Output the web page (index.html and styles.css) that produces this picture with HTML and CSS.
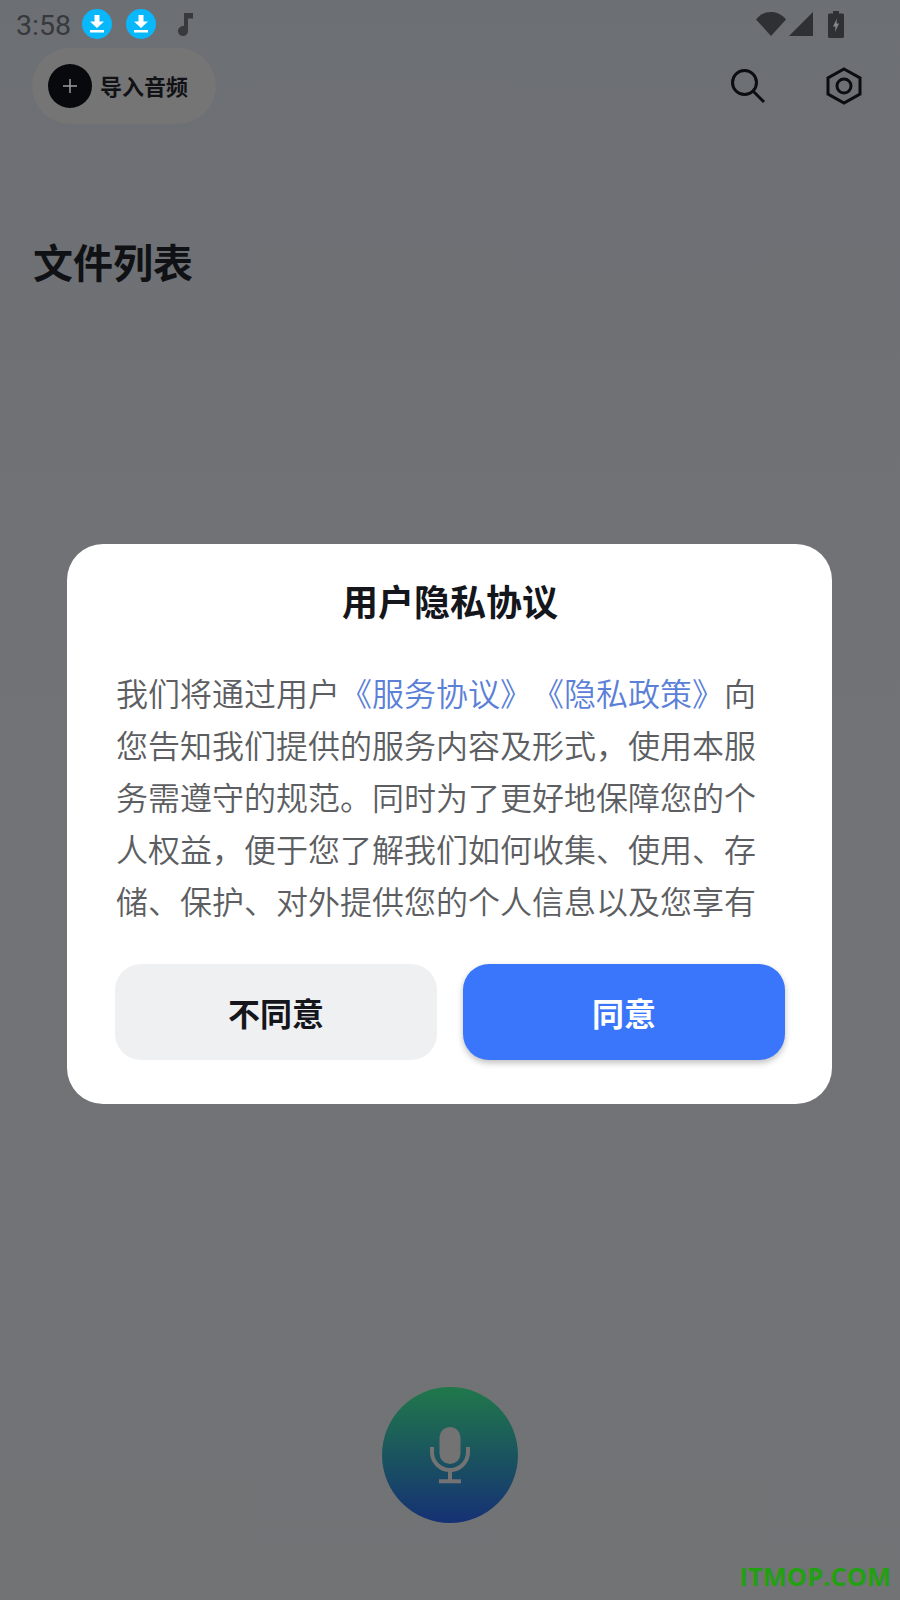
FILE: index.html
```html
<!DOCTYPE html>
<html lang="zh-CN">
<head>
    <meta charset="UTF-8">
    <meta name="viewport" content="width=device-width, initial-scale=1.0">
    <title>文件列表</title>
    <link rel="stylesheet" href="styles.css">
</head>
<body>
    <div class="screen">
        <!-- Status Bar -->
        <div class="status-bar">
            <div class="status-left">
                <span class="clock">3:58</span>
                <span class="dl-badge">
                    <svg width="18" height="20" viewBox="0 0 18 20"><path d="M6.500 1h5v6.500H16L9 14 2 7.500h4.500z" fill="#fff"/><rect x="2" y="16" width="14" height="2.500" fill="#fff"/></svg>
                </span>
                <span class="dl-badge">
                    <svg width="18" height="20" viewBox="0 0 18 20"><path d="M6.500 1h5v6.500H16L9 14 2 7.500h4.500z" fill="#fff"/><rect x="2" y="16" width="14" height="2.500" fill="#fff"/></svg>
                </span>
                <svg class="note" width="16" height="23" viewBox="0 0 16 23"><path d="M7 0h9v5.500h-5V18a5 5 0 1 1-4-4.900z" fill="#38393c"/></svg>
            </div>
            <div class="status-right">
                <svg width="30" height="26" viewBox="0 0 30 26"><path d="M0 8.500C4 3.500 9 1 15 1s11 2.500 15 7.500L15 25z" fill="#2f3033"/></svg>
                <svg width="24" height="24" viewBox="0 0 24 24"><path d="M24 0v24H0z" fill="#2f3033"/></svg>
                <svg class="battery" width="16" height="27" viewBox="0 0 16 27"><path d="M5 0h6v2.500h3.500q1.500 0 1.500 1.500v21.500q0 1.500-1.500 1.500h-13Q0 27 0 25.500V4q0-1.500 1.500-1.500H5z" fill="#2f3033"/><path d="M9 7.500l-4 8h2.500L7 21l4-8.500H8.500z" fill="#85888c"/></svg>
            </div>
        </div>

        <!-- Top Toolbar -->
        <div class="toolbar">
            <div class="import-pill">
                <span class="plus-circle">
                    <svg width="16" height="16" viewBox="0 0 16 16"><path d="M8 1v14M1 8h14" stroke="#9b9c9e" stroke-width="1.500"/></svg>
                </span>
                <span class="import-label">导入音频</span>
            </div>
            <div class="toolbar-icons">
                <svg width="36" height="36" viewBox="0 0 36 36" fill="none" stroke="#0c0d10" stroke-width="3"><circle cx="14.500" cy="14.500" r="12"/><path d="M23.500 23.500L34 34"/></svg>
                <svg width="36" height="38" viewBox="0 0 36 38" fill="none" stroke="#0c0d10" stroke-width="3"><path d="M18 2l16 9v16l-16 9-16-9V11z"/><circle cx="18" cy="19" r="7"/></svg>
            </div>
        </div>

        <h1 class="page-title">文件列表</h1>

        <!-- Record Button -->
        <div class="record-row">
            <div class="record-btn">
                <svg width="42" height="58" viewBox="0 0 42 58"><rect x="10.500" y="1" width="21" height="37" rx="10.500" fill="#737374"/><path d="M3 21v5a18 18 0 0 0 36 0v-5" fill="none" stroke="#737374" stroke-width="4"/><path d="M21 44v12M10 55.300h22" fill="none" stroke="#737374" stroke-width="4"/></svg>
            </div>
        </div>

        <!-- Privacy Dialog -->
        <div class="dialog-layer">
            <div class="dialog">
                <h2 class="dialog-title">用户隐私协议</h2>
                <p class="dialog-body">我们将通过用户<a class="link">《服务协议》《隐私政策》</a>向您告知我们提供的服务内容及形式，使用本服务需遵守的规范。同时为了更好地保障您的个人权益，便于您了解我们如何收集、使用、存储、保护、对外提供您的个人信息以及您享有</p>
                <div class="dialog-actions">
                    <button class="btn btn-decline">不同意</button>
                    <button class="btn btn-accept">同意</button>
                </div>
            </div>
        </div>

        <div class="site-mark">ITMOP.COM</div>
    </div>
</body>
</html>
```

FILE: styles.css
```css
/* Global Styles */
body, html {
    margin: 0;
    padding: 0;
}

body {
    font-family: "Noto Sans CJK SC", "Noto Sans", sans-serif;
}

.screen {
    position: relative;
    width: 900px;
    height: 1600px;
    overflow: hidden;
    display: flex;
    flex-direction: column;
    background: linear-gradient(180deg, #6c6f74 0%, #707275 35%, #727375 100%);
}

/* Status Bar */
.status-bar {
    height: 48px;
    display: flex;
    justify-content: space-between;
    align-items: center;
    padding: 0 56px 0 16px;
    box-sizing: border-box;
}

.status-left {
    display: flex;
    align-items: center;
}

.clock {
    font-family: Roboto, sans-serif;
    font-size: 28.500px;
    color: #38393c;
    width: 66px;
    margin-top: 2px;
}

.dl-badge {
    width: 30px;
    height: 30px;
    border-radius: 50%;
    background-color: #08b8fb;
    display: flex;
    align-items: center;
    justify-content: center;
    margin-right: 14px;
}

.note {
    margin-left: 7px;
}

.status-right {
    display: flex;
    align-items: center;
    gap: 3px;
}

.battery {
    margin-left: 12px;
}

/* Top Toolbar */
.toolbar {
    display: flex;
    justify-content: space-between;
    align-items: center;
    padding: 0 38px 0 32px;
}

.import-pill {
    width: 184px;
    height: 76px;
    box-sizing: border-box;
    padding-left: 16px;
    border-radius: 38px;
    background-color: #757575;
    display: flex;
    align-items: center;
    gap: 8px;
}

.plus-circle {
    width: 44px;
    height: 44px;
    border-radius: 50%;
    background-color: #08090c;
    display: flex;
    align-items: center;
    justify-content: center;
}

.import-label {
    font-size: 22px;
    line-height: 28px;
    margin-top: -3px;
    font-weight: 700;
    color: #111216;
}

.toolbar-icons {
    display: flex;
    align-items: center;
    gap: 60px;
}

.page-title {
    margin: 108px 0 0 33px;
    font-size: 40px;
    line-height: 58px;
    font-weight: 700;
    color: #101114;
}

/* Record Button */
.record-row {
    margin-top: auto;
    padding-bottom: 77px;
    display: flex;
    justify-content: center;
}

.record-btn {
    width: 136px;
    height: 136px;
    border-radius: 50%;
    background: linear-gradient(180deg, #20784a 0%, #153174 100%);
    display: flex;
    align-items: center;
    justify-content: center;
}

/* Privacy Dialog */
.dialog-layer {
    position: absolute;
    top: 544px;
    left: 67px;
}

.dialog {
    width: 765px;
    height: 560px;
    box-sizing: border-box;
    padding: 27px 47px 0 48px;
    background-color: #fff;
    border-radius: 36px;
}

.dialog-title {
    margin: 0;
    text-align: center;
    font-size: 36px;
    line-height: 58px;
    font-weight: 700;
    color: #14161b;
}

/* keep the full-width book title marks from collapsing together */
.dialog-body {
    margin: 37px 0 0 1px;
    width: 644px;
    height: 260px;
    overflow: hidden;
    font-size: 32px;
    font-weight: 350;
    line-height: 52px;
    color: #5c5e62;
    font-kerning: none;
    text-spacing-trim: space-all;
}

.link {
    color: #5b80d8;
}

.dialog-actions {
    margin-top: 38px;
    display: flex;
    gap: 26px;
}

.btn {
    flex: 1;
    height: 96px;
    border: none;
    border-radius: 26px;
    font-family: inherit;
    font-size: 32px;
    font-weight: 700;
}

.btn-decline {
    background-color: #eff0f2;
    color: #14161b;
}

.btn-accept {
    background-color: #3a76fb;
    color: #fff;
    box-shadow: 0 3px 6px rgba(0, 0, 0, 0.25);
}

.site-mark {
    position: absolute;
    right: 9px;
    bottom: 8px;
    font-family: "Open Sans", sans-serif;
    font-size: 25.500px;
    line-height: 32px;
    font-weight: 700;
    color: #22a012;
}
```
